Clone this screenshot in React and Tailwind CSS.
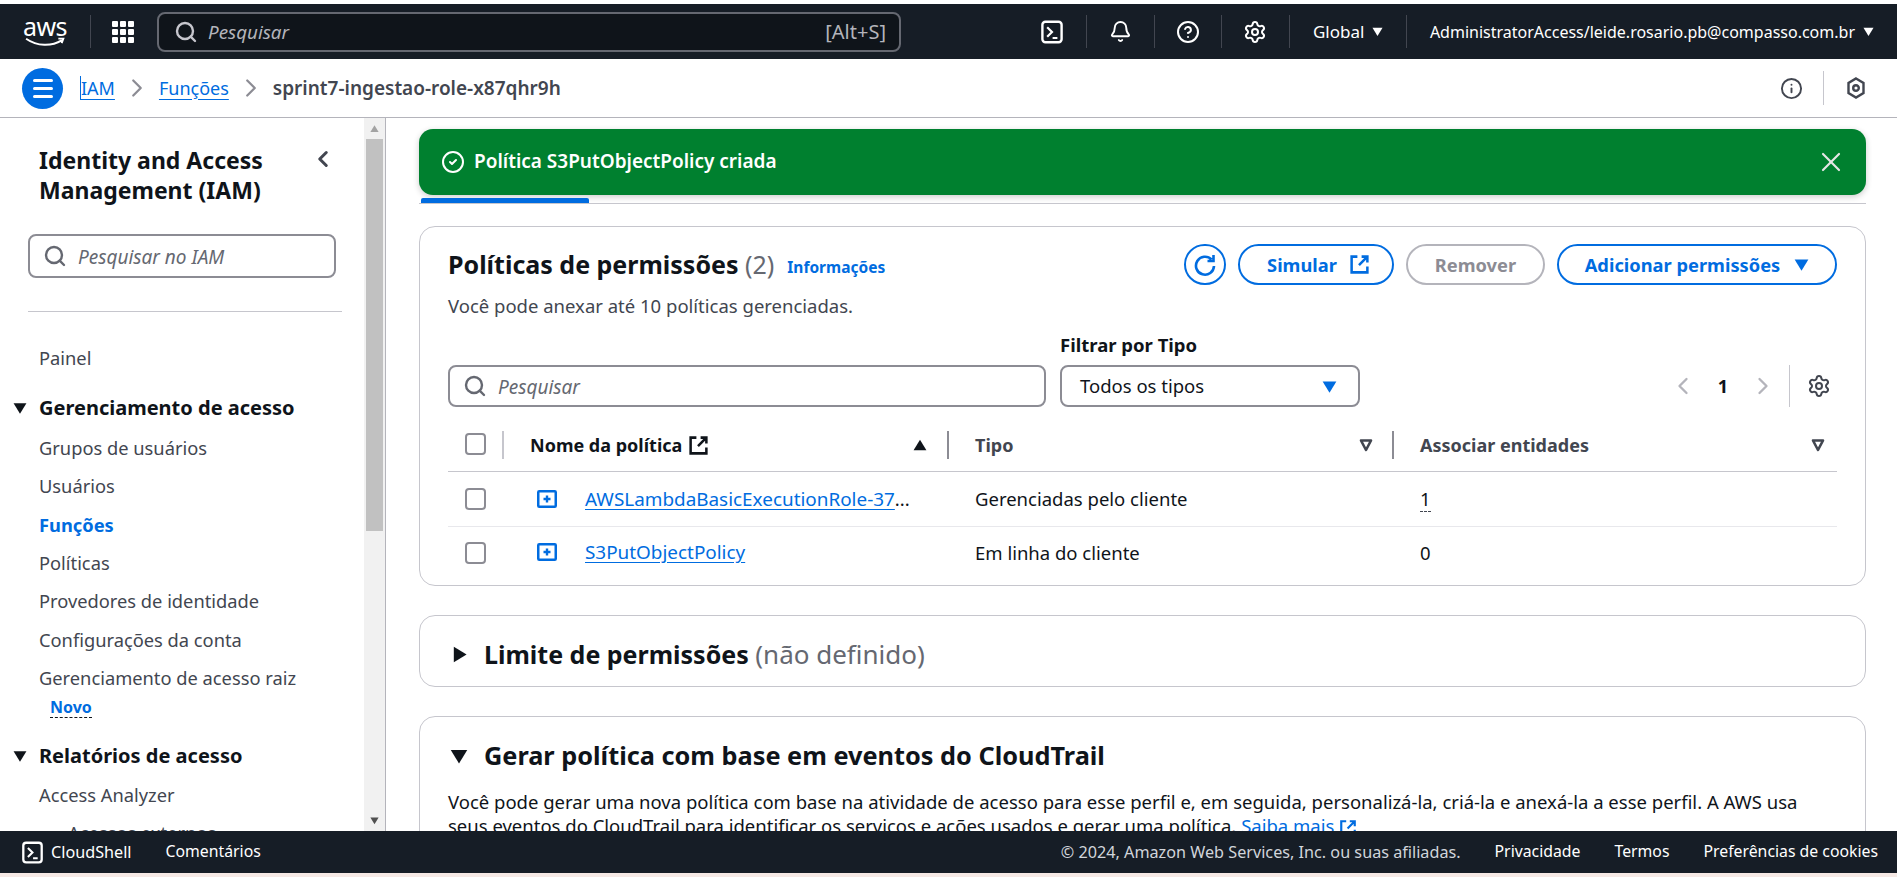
import React from 'react';
import { Search, Bell, CircleHelp, Settings, X, ChevronLeft, ChevronRight, Info, CircleCheck } from 'lucide-react';

const Caret = ({ className = '', dir = 'down' }) => (
  <svg viewBox="0 0 12 12" className={className} fill="currentColor">
    {dir === 'down' && <path d="M0.5 2h11L6 11z" />}
    {dir === 'up' && <path d="M0.5 10.5h11L6 1.5z" />}
    {dir === 'right' && <path d="M2 0.5v11L11 6z" />}
  </svg>
);

const FilterCaret = () => (
  <svg viewBox="0 0 14 14" className="w-[14px] h-[14px] text-[#424650]" fill="none" stroke="currentColor" strokeWidth="2.6" strokeLinejoin="round">
    <path d="M2 2.5h10L7 12z" />
  </svg>
);

const TerminalIcon = ({ className = '' }) => (
  <svg viewBox="0 0 20 20" className={className} fill="none" stroke="currentColor" strokeWidth="2">
    <rect x="2" y="1.5" width="16" height="17" rx="2.5" />
    <path d="M6 6l4 4-4 4M10.5 15h4" strokeWidth="1.8" />
  </svg>
);

const External = ({ className = '' }) => (
  <svg viewBox="0 0 20 20" className={className} fill="none" stroke="currentColor" strokeWidth="2.4">
    <path d="M8 2.5H2.5v15h15V12M12 2.5h5.5V8M17.5 2.5L9.5 10.5" />
  </svg>
);

const Checkbox = () => <div className="w-[21px] h-[22px] rounded-[4px] border-2 border-[#8c8c94] bg-white" />;

const PlusBox = () => (
  <svg viewBox="0 0 20 18" className="w-[20px] h-[18px] text-[#006ce0] shrink-0" fill="none" stroke="currentColor">
    <rect x="1.25" y="1.25" width="17.5" height="15.5" rx="1" strokeWidth="2.5" />
    <path d="M10 5.5v7M6.5 9h7" strokeWidth="2.4" />
  </svg>
);

const navDivider = 'w-px h-[33px] bg-[#424650]';

const TopNav = () => (
  <header className="h-[55px] shrink-0 bg-[#161d26] flex items-center text-white">
    <div className="w-[90px] flex flex-col items-center">
      <span className="text-[25px] leading-[19px] tracking-[-0.5px] h-[20px]">aws</span>
      <svg viewBox="0 0 36 9" className="w-[42px] h-[10px]" fill="none" stroke="white" strokeWidth="1.7">
        <path d="M1 1.5c10 7 23 7 32 1.5M30 1.5l4.5 0-1.5 4" />
      </svg>
    </div>
    <div className="w-px h-[33px] bg-[#424650]" />
    <div className="w-[22px] h-[22px] ml-[21px] grid grid-cols-3 gap-[2px]">
      {Array.from({ length: 9 }).map((_, i) => (
        <div key={i} className="bg-white rounded-[1px]" />
      ))}
    </div>
    <div className="ml-[23px] w-[744px] h-[40px] rounded-[8px] border-2 border-[#656871] bg-[#0f141a] flex items-center pl-[15px] pr-[13px]">
      <Search className="w-[24px] h-[24px] text-[#c6c6cd] shrink-0" strokeWidth={2.4} />
      <span className="ml-[10px] pt-[1px] italic text-[18.8px] text-[#b4b4bb]">Pesquisar</span>
      <span className="ml-auto pt-[1px] text-[20px] text-[#b4b4bb]">[Alt+S]</span>
    </div>
    <div className="ml-auto flex items-center">
      <div className="w-[68px] flex justify-center pl-[1px]"><TerminalIcon className="w-[24px] h-[24px]" /></div>
      <div className={navDivider} />
      <div className="w-[67px] flex justify-center"><Bell className="w-[23px] h-[23px]" strokeWidth={2} /></div>
      <div className={navDivider} />
      <div className="w-[66px] flex justify-center"><CircleHelp className="w-[24px] h-[24px]" strokeWidth={2} /></div>
      <div className={navDivider} />
      <div className="w-[67px] flex justify-center"><Settings className="w-[24px] h-[24px]" strokeWidth={2} /></div>
      <div className={navDivider} />
      <div className="w-[116px] flex items-center pl-[23px] text-[17px]">
        <span>Global</span>
        <Caret className="w-[11px] h-[11px] ml-[8px]" />
      </div>
      <div className={navDivider} />
      <div className="flex items-center pl-[23px] pr-[23px] text-[16px]">
        <span>AdministratorAccess/leide.rosario.pb@compasso.com.br</span>
        <Caret className="w-[11px] h-[11px] ml-[8px]" />
      </div>
    </div>
  </header>
);

const Breadcrumb = () => (
  <div className="h-[59px] shrink-0 bg-white border-b border-[#b4b4bb] flex items-center text-[18px]">
    <div className="ml-[22px] w-[41px] h-[41px] rounded-full bg-[#006ce0] flex flex-col items-center justify-center gap-[5px]">
      <div className="w-[20px] h-[3px] bg-white rounded-sm" />
      <div className="w-[20px] h-[3px] bg-white rounded-sm" />
      <div className="w-[20px] h-[3px] bg-white rounded-sm" />
    </div>
    <a className="ml-[17px] text-[#006ce0] underline underline-offset-[4px] border-l border-[#006ce0] leading-[24px]">IAM</a>
    <ChevronRight className="w-[30px] h-[30px] mx-[7px] text-[#8c8c94]" strokeWidth={1.8} />
    <a className="text-[#006ce0] underline underline-offset-[4px]">Funções</a>
    <ChevronRight className="w-[30px] h-[30px] mx-[7px] text-[#8c8c94]" strokeWidth={1.8} />
    <span className="text-[19px] font-semibold text-[#424650]">sprint7-ingestao-role-x87qhr9h</span>
    <div className="ml-auto flex items-center">
      <Info className="w-[23px] h-[23px] text-[#424650] translate-x-[1px]" strokeWidth={2} />
      <div className="w-px h-[34px] bg-[#c6c6cd] ml-[21px]" />
      <svg viewBox="0 0 20 22" className="w-[20px] h-[22px] ml-[22px] mr-[31px] text-[#424650]" fill="none" stroke="currentColor" strokeWidth="2.4">
        <path d="M10 1.5l7.5 4.5v10l-7.5 4.5L2.5 16V6z" />
        <circle cx="10" cy="11" r="2.8" />
      </svg>
    </div>
  </div>
);

const sideLink = 'h-[38.4px] flex items-center pl-[39px] text-[18.3px] text-[#424650]';

const SideHeading = ({ children, className = '' }) => (
  <div className={`h-[38px] flex items-center pl-[13px] text-[20px] font-bold text-[#0f141a] ${className}`}>
    <Caret className="w-[14px] h-[14px] mr-[12px]" />
    <span>{children}</span>
  </div>
);

const Sidebar = () => (
  <aside className="w-[386px] shrink-0 flex border-r border-[#b4b4bb]">
    <div className="w-[364px] overflow-hidden">
      <div className="pt-[27px] pl-[39px] pr-[28px] flex items-start justify-between">
        <h2 className="text-[23px] leading-[30px] font-bold text-[#0f141a]">
          Identity and Access
          <br />
          Management (IAM)
        </h2>
        <ChevronLeft className="w-[26px] h-[26px] text-[#424650] mt-[1px]" strokeWidth={2.8} />
      </div>
      <div className="mt-[29px] ml-[28px] w-[308px] h-[44px] rounded-[8px] border-2 border-[#8c8c94] flex items-center pl-[13px]">
        <Search className="w-[24px] h-[24px] text-[#656871]" strokeWidth={2.4} />
        <span className="ml-[11px] pt-[2px] italic text-[19px] text-[#656871]">Pesquisar no IAM</span>
      </div>
      <div className="mt-[33px] ml-[28px] w-[314px] h-px bg-[#c6c6cd]" />
      <div className={`${sideLink} mt-[27px]`}>Painel</div>
      <SideHeading className="mt-[12px]">Gerenciamento de acesso</SideHeading>
      <div className={`${sideLink} mt-[1px]`}>Grupos de usuários</div>
      <div className={sideLink}>Usuários</div>
      <div className={`${sideLink} !text-[#006ce0] font-bold`}>Funções</div>
      <div className={sideLink}>Políticas</div>
      <div className={sideLink}>Provedores de identidade</div>
      <div className={sideLink}>Configurações da conta</div>
      <div className={sideLink}>Gerenciamento de acesso raiz</div>
      <div className="h-[20px] pl-[50px] flex items-center">
        <span className="text-[16px] leading-[20px] font-bold text-[#006ce0] border-b border-dashed border-[#0f141a]">Novo</span>
      </div>
      <SideHeading className="mt-[20px]">Relatórios de acesso</SideHeading>
      <div className={sideLink}>Access Analyzer</div>
      <div className={`${sideLink} pl-[68px]`}>Acessos externos</div>
    </div>
    <div className="w-[21px] bg-[#f1f1f1] flex flex-col items-center relative">
      <div className="h-[21px] flex items-center justify-center">
        <Caret dir="up" className="w-[9px] h-[9px] text-[#a3a3a3]" />
      </div>
      <div className="w-[17px] h-[392px] bg-[#c1c1c1]" />
      <div className="mt-auto h-[21px] flex items-center justify-center">
        <Caret className="w-[9px] h-[9px] text-[#505050]" />
      </div>
    </div>
  </aside>
);

const Flash = () => (
  <div className="h-[66px] rounded-[14px] bg-[#00802f] text-white flex items-center pl-[22px] pr-[19px] shadow-[0_2px_6px_rgba(0,0,0,0.2)]">
    <CircleCheck className="w-[24px] h-[24px]" strokeWidth={2} />
    <span className="ml-[9px] pb-[1px] text-[19px] font-semibold">Política S3PutObjectPolicy criada</span>
    <X className="ml-auto w-[32px] h-[32px] text-[#e6e6e6]" strokeWidth={1.6} />
  </div>
);

const pillBlue = 'h-[41px] rounded-full border-2 border-[#006ce0] text-[#006ce0] font-bold text-[18.3px] flex items-center justify-center';
const tableCols = 'grid grid-cols-[54px_445px_445px_445px]';

const PermissionsCard = () => (
  <section className="mt-[22px] h-[360px] rounded-[16px] border border-[#c6c6cd] px-[28px] pt-[17px]">
    <div className="flex items-center h-[41px]">
      <h2 className="text-[25px] font-bold text-[#0f141a]">
        Políticas de permissões <span className="font-normal text-[#656871]">(2)</span>
      </h2>
      <a className="ml-[13px] mt-[6px] text-[15.5px] font-bold text-[#006ce0]">Informações</a>
      <div className="ml-auto flex items-center gap-[12px]">
        <div className="w-[42px] h-[41px] rounded-full border-2 border-[#006ce0] flex items-center justify-center">
          <svg viewBox="0 0 24 24" className="w-[24px] h-[24px] text-[#006ce0]" fill="none" stroke="currentColor" strokeWidth="2.6">
            <path d="M18.5 6.5A9 9 0 1 0 21 13M20.5 2v6h-6" />
          </svg>
        </div>
        <div className={`${pillBlue} w-[156px] pl-[5px]`}>
          <span className="pt-[1px]">Simular</span>
          <External className="w-[21px] h-[21px] ml-[12px]" />
        </div>
        <div className="w-[139px] h-[41px] rounded-full border-2 border-[#b4b4bb] text-[#8c8c94] font-bold text-[18.3px] flex items-center justify-center">
          <span className="pt-[1px]">Remover</span>
        </div>
        <div className={`${pillBlue} w-[280px]`}>
          <span className="pt-[1px]">Adicionar permissões</span>
          <Caret className="w-[15px] h-[15px] ml-[14px]" />
        </div>
      </div>
    </div>
    <p className="mt-[10px] text-[18.5px] leading-[22px] text-[#424650]">Você pode anexar até 10 políticas gerenciadas.</p>
    <div className="mt-[17px] flex items-end">
      <div className="w-[598px] h-[42px] rounded-[8px] border-2 border-[#8c8c94] flex items-center pl-[13px]">
        <Search className="w-[24px] h-[24px] text-[#656871]" strokeWidth={2.4} />
        <span className="ml-[11px] pt-[2px] italic text-[19px] text-[#656871]">Pesquisar</span>
      </div>
      <div className="ml-[14px] w-[300px]">
        <div className="text-[18.5px] leading-[22px] font-bold text-[#0f141a] mb-[9px]">Filtrar por Tipo</div>
        <div className="h-[42px] rounded-[8px] border-2 border-[#8c8c94] flex items-center pl-[18px] pr-[21px] text-[18.5px] text-[#0f141a]">
          <span>Todos os tipos</span>
          <Caret className="ml-auto w-[15px] h-[15px] text-[#006ce0]" />
        </div>
      </div>
      <div className="ml-auto h-[42px] flex items-center pr-[6px]">
        <ChevronLeft className="w-[28px] h-[28px] text-[#b4b4bb]" strokeWidth={2} />
        <span className="mx-[21px] text-[18px] font-bold text-[#0f141a]">1</span>
        <ChevronRight className="w-[28px] h-[28px] text-[#b4b4bb]" strokeWidth={2} />
        <div className="w-px h-[42px] bg-[#c6c6cd] ml-[12px]" />
        <Settings className="w-[24px] h-[24px] text-[#424650] ml-[17px]" strokeWidth={2} />
      </div>
    </div>
    <div className={`${tableCols} h-[65px] pt-[24px] border-b border-[#c6c6cd]`}>
      <div className="pl-[17px] pt-[2px]"><Checkbox /></div>
      <div className="h-[28px] border-l-2 border-[#c6c6cd] pl-[26px] pr-[20px] flex items-center text-[18px] font-bold text-[#0f141a]">
        <span>Nome da política</span>
        <External className="w-[21px] h-[21px] ml-[6px]" />
        <Caret dir="up" className="ml-auto w-[14px] h-[14px]" />
      </div>
      <div className="h-[28px] border-l-2 border-[#8c8c94] pl-[26px] pr-[19px] flex items-center text-[18px] font-bold text-[#424650]">
        <span>Tipo</span>
        <span className="ml-auto"><FilterCaret /></span>
      </div>
      <div className="h-[28px] border-l-2 border-[#8c8c94] pl-[26px] pr-[12px] flex items-center text-[18px] font-bold text-[#424650]">
        <span>Associar entidades</span>
        <span className="ml-auto"><FilterCaret /></span>
      </div>
    </div>
    <div className={`${tableCols} h-[55px] items-center border-b border-[#e8e8ec] text-[18.5px] text-[#0f141a]`}>
      <div className="pl-[17px]"><Checkbox /></div>
      <div className="pl-[35px] flex items-center">
        <PlusBox />
        <span className="ml-[28px]">
          <a className="text-[18.9px] text-[#006ce0] underline underline-offset-[3px]">AWSLambdaBasicExecutionRole-37</a>...
        </span>
      </div>
      <div className="pl-[28px]">Gerenciadas pelo cliente</div>
      <div className="pl-[28px]">
        <span className="border-b border-dashed border-[#424650]">1</span>
      </div>
    </div>
    <div className={`${tableCols} h-[51px] items-center text-[18.5px] text-[#0f141a]`}>
      <div className="pl-[17px]"><Checkbox /></div>
      <div className="pl-[35px] flex items-center">
        <PlusBox />
        <a className="ml-[28px] text-[18.9px] text-[#006ce0] underline underline-offset-[3px]">S3PutObjectPolicy</a>
      </div>
      <div className="pl-[28px]">Em linha do cliente</div>
      <div className="pl-[28px]">0</div>
    </div>
  </section>
);

const Main = () => (
  <main className="flex-1 overflow-hidden pl-[33px] pr-[31px] pt-[11px]">
    <Flash />
    <div className="mt-[3px] border-b border-[#c6c6cd]">
      <div className="ml-[2px] w-[168px] h-[5px] rounded-t-[2px] bg-[#006ce0]" />
    </div>
    <PermissionsCard />
    <section className="mt-[29px] h-[72px] rounded-[16px] border border-[#c6c6cd] pl-[31px] pt-[6px] flex items-center">
      <Caret dir="right" className="w-[17px] h-[17px] text-[#0f141a]" />
      <h2 className="ml-[16px] text-[25px] font-bold text-[#0f141a]">
        Limite de permissões <span className="text-[26px] font-normal text-[#656871]">(não definido)</span>
      </h2>
    </section>
    <section className="mt-[29px] h-[200px] rounded-[16px] border border-[#c6c6cd] px-[28px] pt-[23px]">
      <div className="flex items-center h-[32px]">
        <Caret className="w-[18px] h-[18px] text-[#0f141a] ml-[2px]" />
        <h2 className="ml-[16px] text-[25.3px] font-bold text-[#0f141a]">Gerar política com base em eventos do CloudTrail</h2>
      </div>
      <p className="mt-[18px] text-[18.5px] leading-[24px] text-[#0f141a]">
        Você pode gerar uma nova política com base na atividade de acesso para esse perfil e, em seguida, personalizá-la, criá-la e anexá-la a esse perfil. A AWS usa seus eventos do CloudTrail para identificar os serviços e ações usados e gerar uma política.{' '}
        <a className="text-[#006ce0] underline underline-offset-[3px]">Saiba mais</a>{' '}
        <External className="inline w-[18px] h-[18px] text-[#006ce0]" />
      </p>
    </section>
  </main>
);

const Footer = () => (
  <footer className="h-[42px] shrink-0 bg-[#161d26] text-white flex items-center text-[15.8px]">
    <TerminalIcon className="ml-[21px] w-[23px] h-[23px]" />
    <span className="ml-[7px] text-[16.2px]">CloudShell</span>
    <span className="ml-[34px]">Comentários</span>
    <span className="ml-auto text-[16.2px] text-[#d1d5db]">© 2024, Amazon Web Services, Inc. ou suas afiliadas.</span>
    <span className="ml-[34px]">Privacidade</span>
    <span className="ml-[34px]">Termos</span>
    <span className="ml-[34px] mr-[19px]">Preferências de cookies</span>
  </footer>
);

export default function App() {
  return (
    <div className="h-[877px] flex flex-col overflow-hidden bg-white font-['Noto_Sans',sans-serif]">
      <div className="h-[4px] shrink-0 bg-white" />
      <TopNav />
      <Breadcrumb />
      <div className="flex-1 min-h-0 flex">
        <Sidebar />
        <Main />
      </div>
      <Footer />
      <div className="h-[4px] shrink-0 bg-[#f6e9e5]" />
    </div>
  );
}
